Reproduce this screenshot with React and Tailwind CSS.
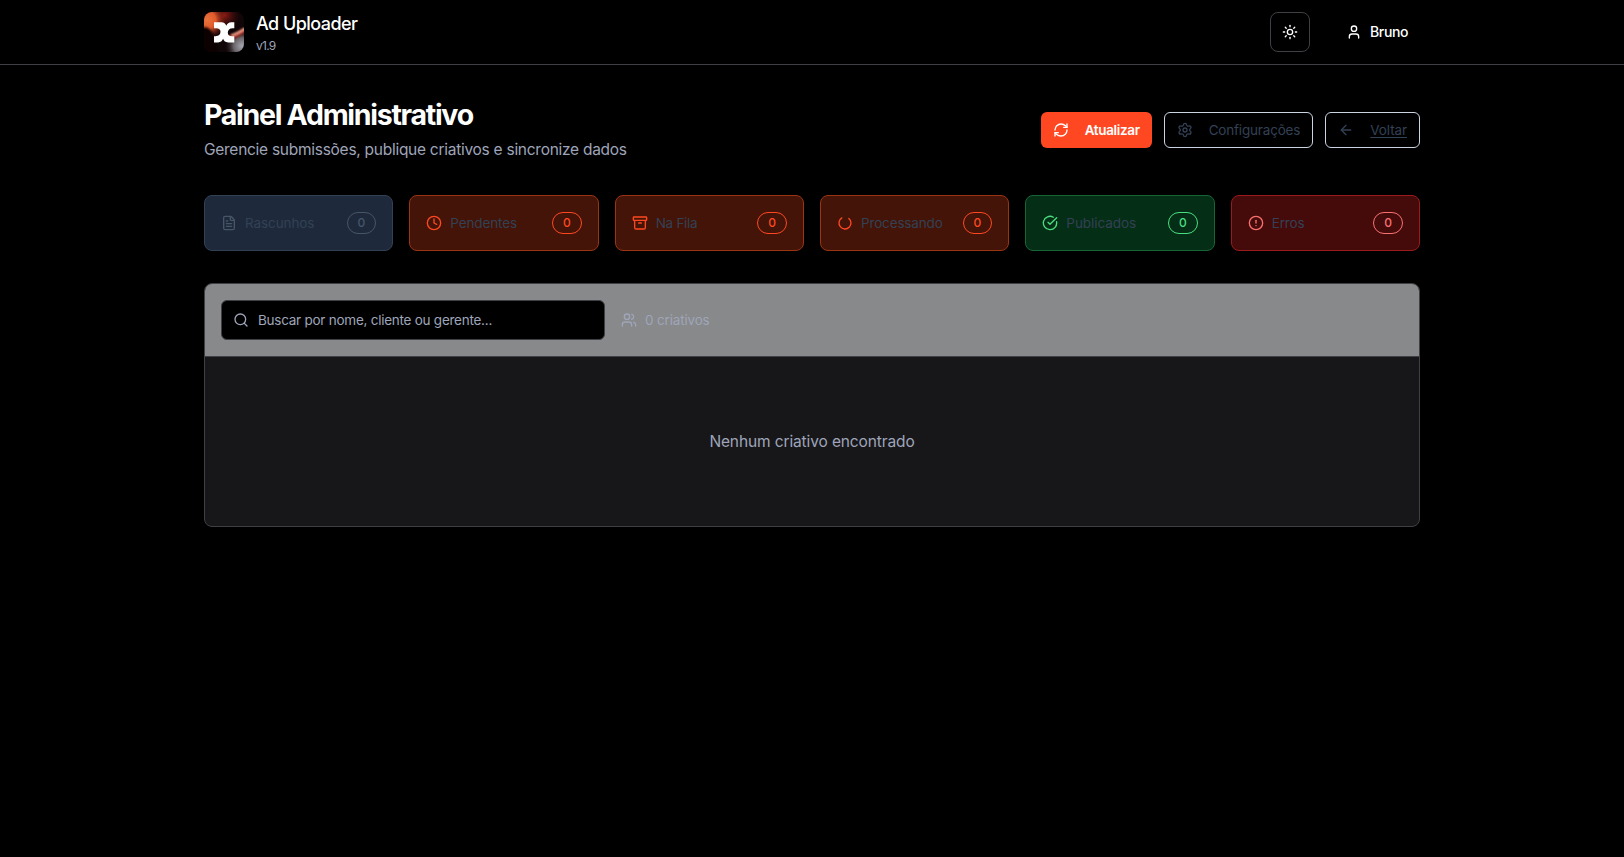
import {
  Sun, User, RefreshCw, Settings, ArrowLeft, FileText, Clock, Archive,
  LoaderCircle, CircleCheckBig, CircleAlert, Search, Users,
} from "lucide-react";

function Logo() {
  return (
    <svg viewBox="0 0 40 40" className="size-10 rounded-lg">
      <defs>
        <radialGradient id="glow" cx="0.08" cy="0.2" r="0.48">
          <stop offset="0" stopColor="#e8743c" />
          <stop offset="0.45" stopColor="#e05a2c" />
          <stop offset="1" stopColor="#7a1a10" stopOpacity="0" />
        </radialGradient>
        <radialGradient id="ember" cx="0.52" cy="0.08" r="0.4">
          <stop offset="0" stopColor="#8a1a14" />
          <stop offset="1" stopColor="#3a0a0c" stopOpacity="0" />
        </radialGradient>
        <radialGradient id="steel" cx="0.95" cy="0.85" r="0.42">
          <stop offset="0" stopColor="#a3a6b0" />
          <stop offset="0.5" stopColor="#6b6468" />
          <stop offset="1" stopColor="#2a2024" stopOpacity="0" />
        </radialGradient>
        <filter id="soft"><feGaussianBlur stdDeviation="1.2" /></filter>
      </defs>
      <rect width="40" height="40" fill="#100507" />
      <rect width="40" height="40" fill="url(#ember)" />
      <rect width="40" height="40" fill="url(#glow)" />
      <rect width="40" height="40" fill="url(#steel)" />
      <path d="M-2 16C5 13 11 20 14 42H-2Z" fill="#0b0406" filter="url(#soft)" />
      <path d="M22 27C30 25 36 22 42 17" stroke="#a8281c" strokeWidth="4" fill="none" filter="url(#soft)" />
      <path d="M27 23.500C32 22.500 37 19.500 42 16" stroke="#f3b09a" strokeWidth="2.200" fill="none" filter="url(#soft)" />
      <path d="M10 10.300h7.500c2.600 0 4 1.300 4.800 3.500 1-2.300 2.500-3.500 5-3.500h3v5.900h-1.500c-3.300 0-5 2-5 4.500 0 2.200 1.500 3.500 4.300 3.500h2.200v6.200h-6.200c-2.700 0-4.200-1.300-5-3.600-1 2.300-2.500 3.600-5 3.600H10v-6.200h1.500c3.300 0 5-1.900 5-4.400 0-2.200-1.500-3.600-4.300-3.600H10Z" fill="#fff" />
    </svg>
  );
}

const orange = { box: "border-[#9a3412] bg-[#431407]", tone: "text-[#ff4822]" };

const cards = [
  { label: "Rascunhos", Icon: FileText, box: "border-[#334155] bg-[#1e293b]", tone: "text-[#475569]", text: "tracking-[-0.1px]" },
  { label: "Pendentes", Icon: Clock, ...orange, text: "tracking-[-0.12px]" },
  { label: "Na Fila", Icon: Archive, ...orange, text: "tracking-[-0.27px]" },
  { label: "Processando", Icon: LoaderCircle, ...orange, text: "tracking-[-0.15px]", turn: "-rotate-50" },
  { label: "Publicados", Icon: CircleCheckBig, box: "border-[#166534] bg-[#052e16]", tone: "text-[#4ade80]", text: "tracking-[-0.05px]" },
  { label: "Erros", Icon: CircleAlert, box: "border-[#991b1b] bg-[#450a0a]", tone: "text-[#f87171]", text: "tracking-[-0.1px]" },
];

export default function App() {
  return (
    <div className="min-h-screen bg-black font-['Inter',sans-serif] text-white">
      <header className="border-b border-[#3f3f46]">
        <div className="mx-auto flex h-16 w-[1216px] items-center justify-between">
          <div className="flex items-center gap-3">
            <Logo />
            <div className="flex flex-col pt-0.5">
              <span className="text-lg leading-[22px] font-medium tracking-[-0.55px]">Ad Uploader</span>
              <span className="pt-[3px] text-xs leading-4 tracking-[-0.75px] text-[#9fa5b9]">v1.9</span>
            </div>
          </div>
          <div className="flex items-center gap-6">
            <button className="flex size-10 items-center justify-center rounded-lg border border-[#3f3f46]">
              <Sun className="size-4" />
            </button>
            <button className="flex h-9 items-center gap-2 px-3 text-sm font-medium tracking-[-0.4px]">
              <User className="size-4" />
              <span>Bruno</span>
            </button>
          </div>
        </div>
      </header>
      <main className="mx-auto w-[1216px] pt-8">
        <div className="flex h-[66px] items-center justify-between">
          <div className="pb-0.5">
            <h1 className="text-[28.5px] leading-[37px] font-bold tracking-[-1.28px]">Painel Administrativo</h1>
            <p className="mt-[5px] text-[15.5px] leading-6 tracking-[-0.27px] text-[#9fa5b9]">Gerencie submissões, publique criativos e sincronize dados</p>
          </div>
          <div className="flex gap-3 text-[13.5px]">
            <button className="flex h-9 items-center gap-4 rounded-md bg-[#ff4822] px-3 font-semibold">
              <RefreshCw className="size-4" />
              <span className="tracking-[-0.35px]">Atualizar</span>
            </button>
            <button className="flex h-9 items-center gap-4 rounded-md border border-[#cbd5e1] px-3 text-[#334155]">
              <Settings className="size-4" />
              <span className="tracking-[-0.18px]">Configurações</span>
            </button>
            <button className="flex h-9 items-center gap-4 rounded-md border border-[#cbd5e1] px-3 text-[#334155]">
              <ArrowLeft className="size-4" />
              <span className="tracking-[-0.1px] underline underline-offset-2">Voltar</span>
            </button>
          </div>
        </div>
        <div className="mt-8 grid grid-cols-6 gap-4">
          {cards.map(({ label, Icon, box, tone, text, turn }) => (
            <div key={label} className={`flex h-14 items-center gap-2 rounded-lg border px-4 ${box}`}>
              <Icon className={`size-4 ${tone} ${turn ?? ""}`} />
              <span className={`flex-1 text-[13.5px] text-[#334155] ${text}`}>{label}</span>
              <span className={`rounded-full border border-current px-2.5 py-0.5 text-xs font-medium ${tone}`}>0</span>
            </div>
          ))}
        </div>
        <section className="mt-8 overflow-hidden rounded-lg border border-[#3f3f46] bg-[#171719]">
          <div className="flex items-center gap-4 border-b border-[#3f3f46] bg-[#88898a] p-4 text-[13.5px] text-[#9fa5b9]">
            <div className="flex h-10 w-96 items-center gap-[9px] rounded-md border border-[#3f3f46] bg-black px-[11px]">
              <Search className="size-4" />
              <span className="tracking-[-0.25px]">Buscar por nome, cliente ou gerente...</span>
            </div>
            <div className="flex items-center gap-2">
              <Users className="size-4" />
              <span className="tracking-[-0.17px]">0 criativos</span>
            </div>
          </div>
          <div className="flex h-[169px] items-center justify-center pt-px text-[15.5px] tracking-[-0.12px] text-[#9fa5b9]">Nenhum criativo encontrado</div>
        </section>
      </main>
    </div>
  );
}
